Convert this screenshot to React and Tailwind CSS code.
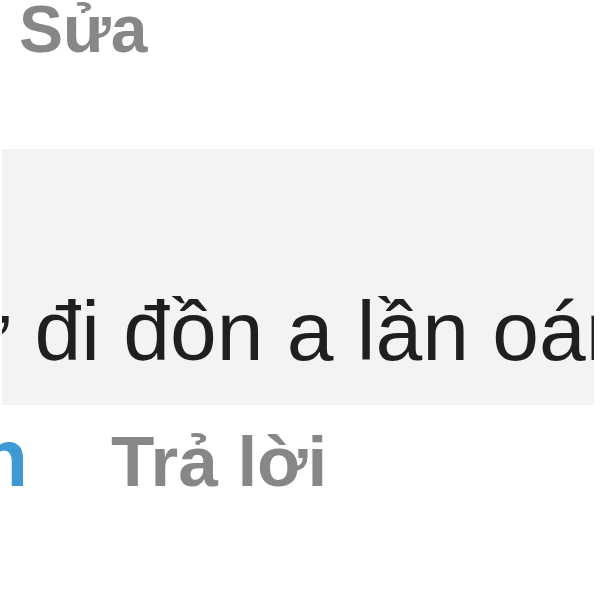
export default function App() {
  return (
    <div className="w-[600px] h-[600px] overflow-hidden bg-white flex flex-col" style={{ fontFamily: '"Liberation Sans", Arial, sans-serif' }}>
      <div className="pl-[19px] mt-[-4px] h-[153px] text-[66px] font-bold leading-none text-[#878787] whitespace-nowrap">Sửa</div>
      <div className="ml-[2px] w-[592px] h-[256px] bg-[#f3f3f3] flex flex-col justify-end pb-[32px] overflow-hidden">
        <div className="ml-[-47px] whitespace-nowrap text-[84px] leading-none text-[#1f1f1f]">ư đi đồn a lần oán nhau</div>
      </div>
      <div className="flex items-end mt-[12px] font-bold leading-none whitespace-nowrap">
        <div className="ml-[-22px] text-[82px] text-[#3d9ad6] mb-[-2px]">n</div>
        <div className="ml-[83px] text-[71px] text-[#878787]">Trả lời</div>
      </div>
    </div>
  );
}
